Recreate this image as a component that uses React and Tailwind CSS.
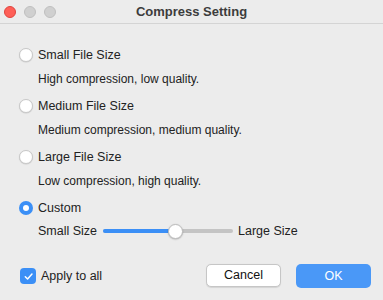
import React, { useState } from "react";

const options = [
  { id: "small", label: "Small File Size", desc: "High compression, low quality." },
  { id: "medium", label: "Medium File Size", desc: "Medium compression, medium quality." },
  { id: "large", label: "Large File Size", desc: "Low compression, high quality." },
];

function Radio({ checked }) {
  return checked ? (
    <span className="w-[14px] h-[14px] rounded-full bg-[#3b8ff6] flex items-center justify-center shrink-0">
      <span className="w-[6px] h-[6px] rounded-full bg-white" />
    </span>
  ) : (
    <span className="w-[14px] h-[14px] rounded-full bg-white border border-[#c8c8c8] shadow-[0_0.5px_1px_rgba(0,0,0,0.15)] shrink-0" />
  );
}

export default function App() {
  const [selected, setSelected] = useState("custom");
  const [value] = useState(55);

  return (
    <div
      className="w-[383px] h-[300px] bg-[#ececec] text-[12.5px] text-[#222] flex flex-col"
      style={{ fontFamily: "'Liberation Sans', Arial, sans-serif" }}
    >
      {/* title bar */}
      <div className="h-[24px] border-b border-[#d4d4d4] flex items-center relative shrink-0">
        <div className="flex items-center gap-[8px] pl-[4px]">
          <span className="w-[12px] h-[12px] rounded-full bg-[#fe5f57] border border-[#e0443e]" />
          <span className="w-[12px] h-[12px] rounded-full bg-[#d0d0d0] border border-[#c0c0c0]" />
          <span className="w-[12px] h-[12px] rounded-full bg-[#d0d0d0] border border-[#c0c0c0]" />
        </div>
        <div className="absolute inset-0 flex items-center justify-center font-bold text-[13px] text-[#3c3c3c] pointer-events-none">
          Compress Setting
        </div>
      </div>

      <div className="flex flex-col pl-[19px] pt-[23px]">
        {options.map((o) => (
          <div key={o.id} className="flex flex-col">
            <button
              onClick={() => setSelected(o.id)}
              className="flex items-center gap-[5px] h-[16px] text-left"
            >
              <Radio checked={selected === o.id} />
              <span>{o.label}</span>
            </button>
            <div className="pl-[19px] mt-[8px] mb-[10px] h-[17px] leading-[17px] text-[12px]">{o.desc}</div>
          </div>
        ))}
        <button
          onClick={() => setSelected("custom")}
          className="flex items-center gap-[5px] h-[16px] text-left"
        >
          <Radio checked={selected === "custom"} />
          <span>Custom</span>
        </button>
        <div className="flex items-center pl-[19px] mt-[7px] h-[16px]">
          <span>Small Size</span>
          <div className="relative w-[130px] h-[4px] ml-[6px] rounded-full bg-[#c4c4c4]">
            <div className="h-full rounded-full bg-[#3b8ff6]" style={{ width: `${value}%` }} />
            <div
              className="absolute top-1/2 w-[15px] h-[15px] -ml-[7px] -mt-[7.5px] rounded-full bg-white border border-[#bdbdbd] shadow-[0_0.5px_1.5px_rgba(0,0,0,0.25)]"
              style={{ left: `${value}%` }}
            />
          </div>
          <span className="ml-[5px]">Large Size</span>
        </div>
      </div>

      <div className="flex items-center mt-auto mb-[12px] pl-[20px] pr-[12px]">
        <span className="w-[16px] h-[16px] rounded-[4px] bg-[#3b8ff6] flex items-center justify-center">
          <svg width="11" height="11" viewBox="0 0 12 12" fill="none">
            <path d="M2.5 6.3 L5 8.8 L9.8 3.3" stroke="white" strokeWidth="1.6" strokeLinecap="round" strokeLinejoin="round" />
          </svg>
        </span>
        <span className="ml-[5px]">Apply to all</span>
        <div className="ml-auto flex gap-[15px]">
          <button className="w-[75px] h-[23px] rounded-[5px] bg-white border border-[#c6c6c6] shadow-[0_0.5px_1px_rgba(0,0,0,0.1)] text-[#111]">
            Cancel
          </button>
          <button className="w-[75px] h-[24px] rounded-[5px] bg-[#4a98f7] text-white">
            OK
          </button>
        </div>
      </div>
    </div>
  );
}
